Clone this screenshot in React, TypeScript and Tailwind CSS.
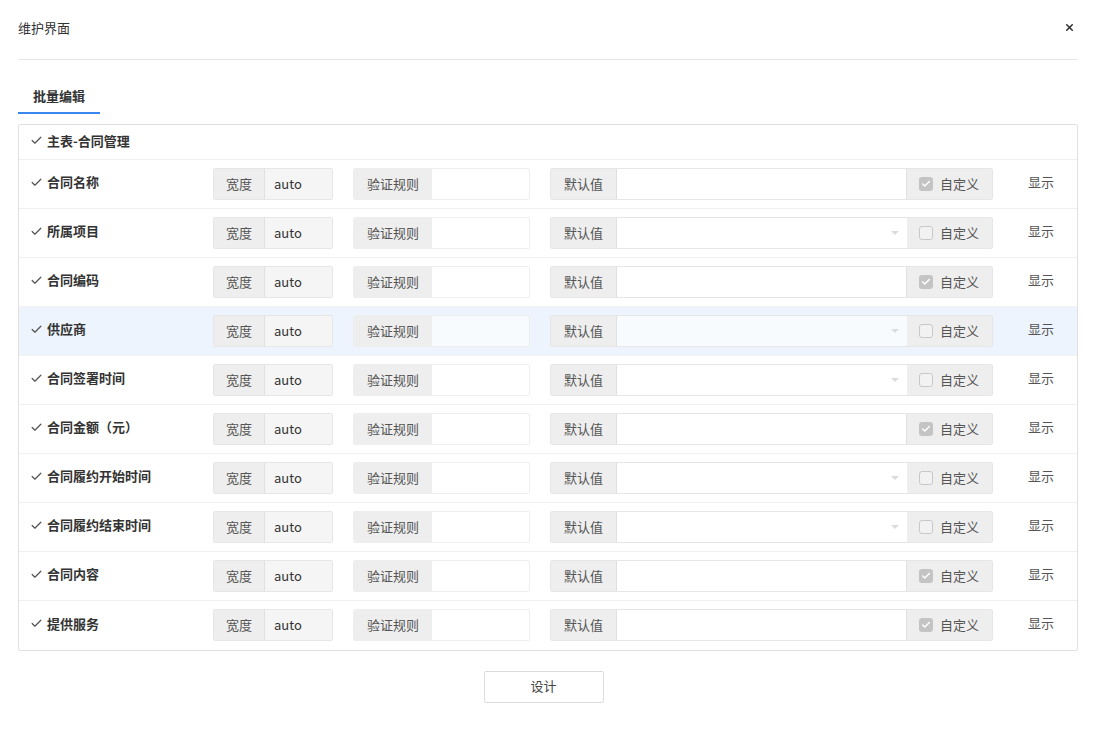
import { Check, X } from "lucide-react";

type Field = { name: string; select: boolean };

const fields: Field[] = [
  { name: "合同名称", select: false },
  { name: "所属项目", select: true },
  { name: "合同编码", select: false },
  { name: "供应商", select: true },
  { name: "合同签署时间", select: true },
  { name: "合同金额（元）", select: false },
  { name: "合同履约开始时间", select: true },
  { name: "合同履约结束时间", select: true },
  { name: "合同内容", select: false },
  { name: "提供服务", select: false },
];

const font = { fontFamily: '"Noto Sans CJK SC", "Noto Sans", sans-serif' };

function Row({ f, active }: { f: Field; active: boolean }) {
  return (
    <div className={`flex items-center h-[49px] border-b border-[#f0f0f0] last:border-b-0 ${active ? "bg-[#edf4fd]" : ""}`}>
      <div className="w-[194px] pl-[11px] flex items-center gap-[4px] pb-[3px]">
        <Check className="h-[13px] w-[13px] text-[#555]" strokeWidth={2.3} />
        <span className="text-[13px] font-bold text-[#333]">{f.name}</span>
      </div>

      {/* width */}
      <div className="flex h-[32px] w-[120px] rounded-[2px] border border-[#e6e6e6] text-[13px] overflow-hidden">
        <div className="w-[51px] bg-[#eeeeee] text-[#555] grid place-items-center border-r border-[#e0e0e0]">宽度</div>
        <div className="flex-1 bg-[#f5f5f5] text-[#333] flex items-center pl-[9px]">auto</div>
      </div>

      {/* validation */}
      <div className="ml-[20px] flex h-[32px] w-[177px] rounded-[2px] border border-[#eeeeee] text-[13px] overflow-hidden">
        <div className="w-[78px] bg-[#eeeeee] text-[#555] grid place-items-center">验证规则</div>
        <div className="flex-1 bg-white/60"></div>
      </div>

      {/* default */}
      <div className="ml-[20px] flex h-[32px] w-[443px] rounded-[2px] border border-[#e6e6e6] text-[13px] overflow-hidden">
        <div className="w-[66px] bg-[#eeeeee] text-[#555] grid place-items-center border-r border-[#e0e0e0]">默认值</div>
        {f.select ? (
          <div className="flex-1 bg-white/60 flex items-center justify-end pr-[8px]">
            <span className="w-0 h-0 border-x-[4px] border-x-transparent border-t-[4px] border-t-[#dcdcdc]"></span>
          </div>
        ) : (
          <div className="flex-1 bg-white border-r border-[#e0e0e0]"></div>
        )}
        <div className="w-[85px] bg-[#eeeeee] flex items-center pl-[12px] gap-[7px] text-[#555]">
          {f.select ? (
            <span className="h-[14px] w-[14px] rounded-[3px] border border-[#c8c8c8] bg-[#f2f2f2]"></span>
          ) : (
            <span className="h-[14px] w-[14px] rounded-[3px] bg-[#c4c4c4] grid place-items-center">
              <Check className="h-[10px] w-[10px] text-white" strokeWidth={3.5} />
            </span>
          )}
          <span>自定义</span>
        </div>
      </div>

      <div className="ml-[35px] text-[13px] text-[#555] pb-[4px]">显示</div>
    </div>
  );
}

export default function App() {
  return (
    <div className="w-[1096px] h-[730px] bg-white px-[18px] relative" style={font}>
      <div className="h-[60px] flex items-center justify-between border-b border-[#e5e5e5] pb-[4px]">
        <span className="text-[13px] text-[#333]">维护界面</span>
        <X className="h-[11px] w-[11px] text-[#333] mr-[3px]" strokeWidth={3.5} />
      </div>

      <div className="mt-[26px] flex">
        <div className="px-[15px] pb-[6px] border-b-2 border-[#3a86ef] text-[13px] font-bold text-[#333]">批量编辑</div>
      </div>

      <div className="mt-[10px] border border-[#e0e0e0] rounded-[2px]">
        <div className="h-[35px] flex items-center gap-[4px] pl-[11px] border-b border-[#f0f0f0] pb-[2px]">
          <Check className="h-[13px] w-[13px] text-[#555]" strokeWidth={2.3} />
          <span className="text-[13px] font-bold text-[#333]">主表-合同管理</span>
        </div>
        {fields.map((f, i) => (
          <Row key={f.name} f={f} active={i === 3} />
        ))}
      </div>

      <div className="mt-[20px] flex justify-center pr-[9px]">
        <button className="w-[120px] h-[32px] border border-[#dcdcdc] rounded-[2px] bg-white text-[13px] text-[#444] pb-[1px]">设计</button>
      </div>
    </div>
  );
}
